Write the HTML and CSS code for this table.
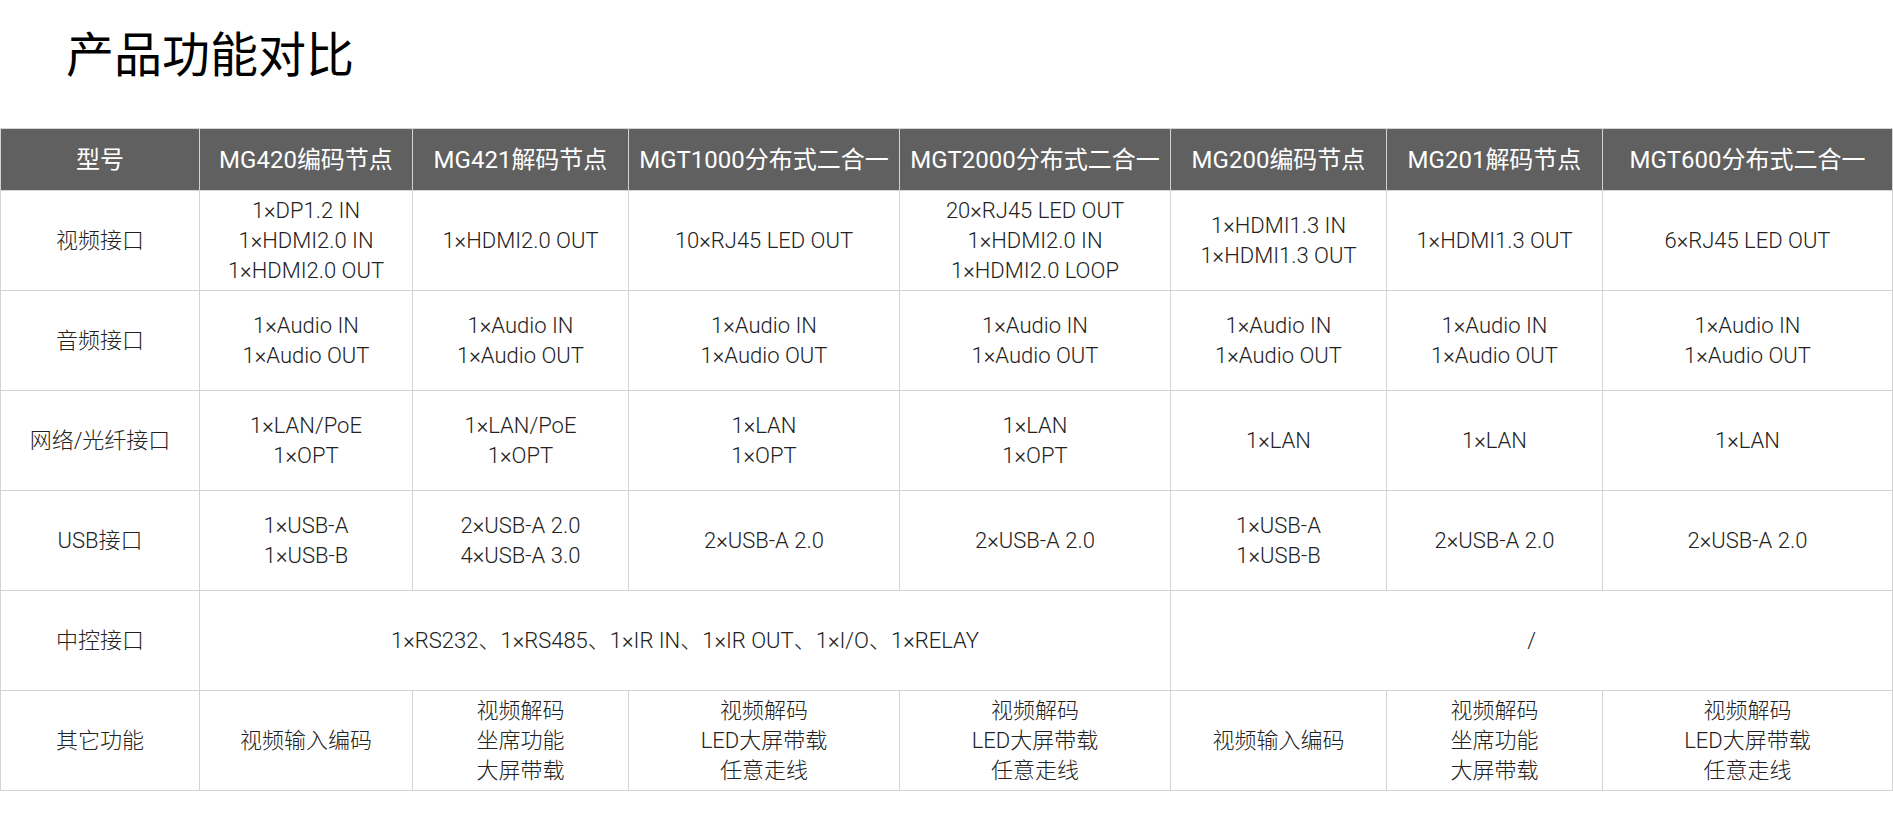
FILE: index.html
```html
<!DOCTYPE html>
<html lang="zh-CN">
<head>
<meta charset="utf-8">
<title>产品功能对比</title>
<link rel="stylesheet" href="styles.css">
</head>
<body>
<header class="page-head">
  <h1 class="title">产品功能对比</h1>
</header>
<table class="compare">
  <colgroup>
    <col class="c0"><col class="c1"><col class="c2"><col class="c3"><col class="c4"><col class="c5"><col class="c6"><col class="c7">
  </colgroup>
  <thead>
    <tr>
      <th>型号</th>
      <th>MG420编码节点</th>
      <th>MG421解码节点</th>
      <th>MGT1000分布式二合一</th>
      <th>MGT2000分布式二合一</th>
      <th>MG200编码节点</th>
      <th>MG201解码节点</th>
      <th>MGT600分布式二合一</th>
    </tr>
  </thead>
  <tbody>
    <tr>
      <td>视频接口</td>
      <td>1×DP1.2 IN<br>1×HDMI2.0 IN<br>1×HDMI2.0 OUT</td>
      <td>1×HDMI2.0 OUT</td>
      <td>10×RJ45 LED OUT</td>
      <td>20×RJ45 LED OUT<br>1×HDMI2.0 IN<br>1×HDMI2.0 LOOP</td>
      <td>1×HDMI1.3 IN<br>1×HDMI1.3 OUT</td>
      <td>1×HDMI1.3 OUT</td>
      <td>6×RJ45 LED OUT</td>
    </tr>
    <tr>
      <td>音频接口</td>
      <td>1×Audio IN<br>1×Audio OUT</td>
      <td>1×Audio IN<br>1×Audio OUT</td>
      <td>1×Audio IN<br>1×Audio OUT</td>
      <td>1×Audio IN<br>1×Audio OUT</td>
      <td>1×Audio IN<br>1×Audio OUT</td>
      <td>1×Audio IN<br>1×Audio OUT</td>
      <td>1×Audio IN<br>1×Audio OUT</td>
    </tr>
    <tr>
      <td>网络/光纤接口</td>
      <td>1×LAN/PoE<br>1×OPT</td>
      <td>1×LAN/PoE<br>1×OPT</td>
      <td>1×LAN<br>1×OPT</td>
      <td>1×LAN<br>1×OPT</td>
      <td>1×LAN</td>
      <td>1×LAN</td>
      <td>1×LAN</td>
    </tr>
    <tr>
      <td>USB接口</td>
      <td>1×USB-A<br>1×USB-B</td>
      <td>2×USB-A 2.0<br>4×USB-A 3.0</td>
      <td>2×USB-A 2.0</td>
      <td>2×USB-A 2.0</td>
      <td>1×USB-A<br>1×USB-B</td>
      <td>2×USB-A 2.0</td>
      <td>2×USB-A 2.0</td>
    </tr>
    <tr>
      <td>中控接口</td>
      <td colspan="4">1×RS232、1×RS485、1×IR IN、1×IR OUT、1×I/O、1×RELAY</td>
      <td colspan="3">/</td>
    </tr>
    <tr>
      <td>其它功能</td>
      <td>视频输入编码</td>
      <td>视频解码<br>坐席功能<br>大屏带载</td>
      <td>视频解码<br>LED大屏带载<br>任意走线</td>
      <td>视频解码<br>LED大屏带载<br>任意走线</td>
      <td>视频输入编码</td>
      <td>视频解码<br>坐席功能<br>大屏带载</td>
      <td>视频解码<br>LED大屏带载<br>任意走线</td>
    </tr>
  </tbody>
</table>
</body>
</html>
```

FILE: styles.css
```css
html, body {
  margin: 0;
  padding: 0;
  background: #ffffff;
}

body {
  font-family: Roboto, "Noto Sans CJK SC", sans-serif;
  color: #222222;
}

.page-head {
  height: 128px;
  box-sizing: border-box;
  padding: 22px 0 0 66px;
}

.title {
  margin: 0;
  font-family: "Noto Sans CJK SC", sans-serif;
  font-size: 48px;
  font-weight: 400;
  line-height: 58px;
  color: #000000;
}

.compare {
  border-collapse: collapse;
  table-layout: fixed;
  width: 1892px;
}

.c0 { width: 199px; }
.c1 { width: 213px; }
.c2 { width: 216px; }
.c3 { width: 271px; }
.c4 { width: 271px; }
.c5 { width: 216px; }
.c6 { width: 216px; }
.c7 { width: 290px; }

.compare th,
.compare td {
  border: 1px solid #d3d3d3;
  padding: 0;
  text-align: center;
  vertical-align: middle;
  white-space: nowrap;
}

.compare thead tr {
  height: 62px;
}

.compare th {
  background: #606060;
  color: #ffffff;
  font-size: 24px;
  font-weight: 400;
  line-height: 30px;
}

.compare tbody tr {
  height: 100px;
}

.compare td {
  font-size: 22px;
  font-weight: 300;
  line-height: 30px;
  color: #222222;
}
```
